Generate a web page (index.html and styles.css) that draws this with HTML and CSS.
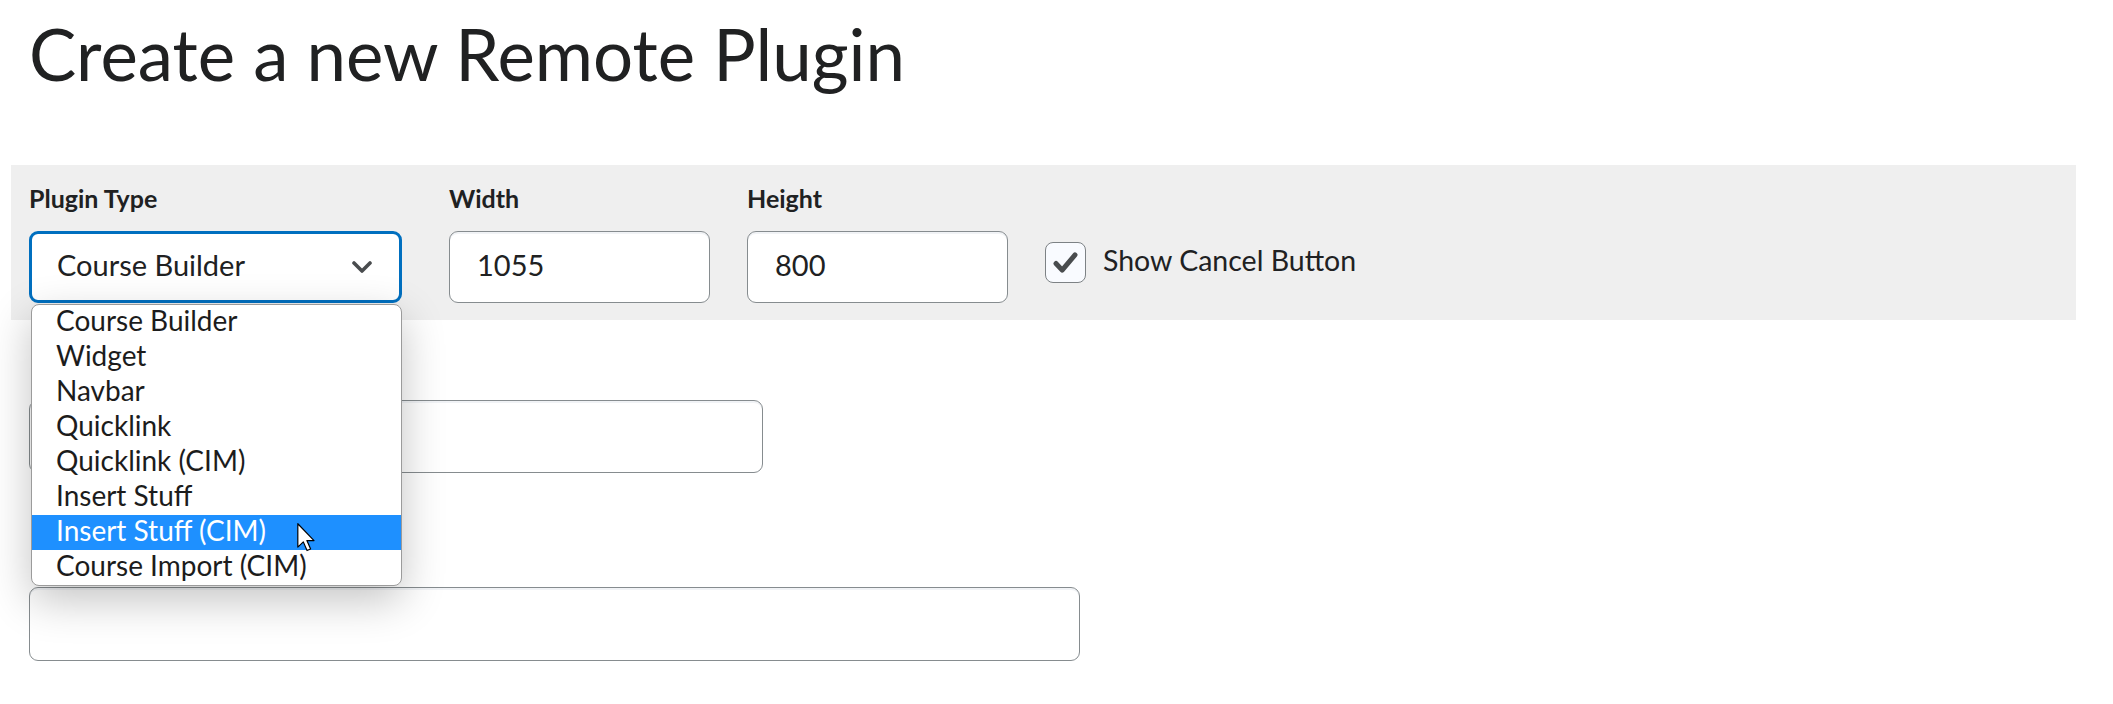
FILE: index.html
```html
<!DOCTYPE html>
<html lang="en">
<head>
<meta charset="utf-8">
<title>Create a new Remote Plugin</title>
<link rel="stylesheet" href="styles.css">
</head>
<body>
<div class="page">
  <h1 class="title">Create a new Remote Plugin</h1>

  <div class="settings">
    <div class="field field-type">
      <label class="label">Plugin Type</label>
      <div class="select">
        <span class="select-value">Course Builder</span>
        <svg class="chevron" width="20" height="12" viewBox="0 0 20 12"><polyline points="2,2 10,10 18,2" fill="none" stroke="#494c4e" stroke-width="3.6" stroke-linecap="round" stroke-linejoin="round"/></svg>
      </div>
    </div>
    <div class="field field-width">
      <label class="label">Width</label>
      <div class="input"><span class="input-text">1055</span></div>
    </div>
    <div class="field field-height">
      <label class="label">Height</label>
      <div class="input"><span class="input-text">800</span></div>
    </div>
    <div class="check-group">
      <span class="checkbox">
        <svg width="41" height="41" viewBox="0 0 41 41"><polyline points="10.5,21.5 17,28.5 30.5,12.5" fill="none" stroke="#494c4e" stroke-width="5.2" stroke-linecap="round" stroke-linejoin="round"/></svg>
      </span>
      <span class="check-label">Show Cancel Button</span>
    </div>
  </div>

  <div class="fields">
    <div class="field field-name">
      <div class="input input-name" aria-label="Name"></div>
    </div>
    <div class="field field-url">
      <div class="input input-url" aria-label="Launch Point URL"></div>
    </div>
  </div>

  <ul class="dropdown">
    <li class="option">Course Builder</li>
    <li class="option">Widget</li>
    <li class="option">Navbar</li>
    <li class="option">Quicklink</li>
    <li class="option">Quicklink (CIM)</li>
    <li class="option">Insert Stuff</li>
    <li class="option option-active">Insert Stuff (CIM)</li>
    <li class="option">Course Import (CIM)</li>
  </ul>

  <svg class="cursor" width="18" height="29" viewBox="0 0 12 19.5"><path d="M0.5,0.5 L0.5,16.2 L4.2,12.7 L6.7,18.5 L9.1,17.5 L6.6,11.8 L11.4,11.8 Z" fill="#ffffff" stroke="#000000" stroke-width="0.8" stroke-linejoin="round"/></svg>
</div>
</body>
</html>
```

FILE: styles.css
```css
html, body {
  margin: 0;
  padding: 0;
  background: #ffffff;
}

body {
  font-family: Lato, "Open Sans", "Liberation Sans", sans-serif;
  color: #202122;
}

.page {
  position: relative;
  width: 2065px;
  padding: 11px 0 0 11px;
}

.title {
  margin: 0 0 69px 18px;
  font-size: 70.8px;
  font-weight: 400;
  line-height: 85px;
  color: #202122;
}

.settings {
  display: flex;
  align-items: flex-end;
  background: #efefef;
  padding: 18px 18px 17px;
}

.field {
  display: flex;
  flex-direction: column;
}

.label {
  font-size: 25px;
  font-weight: 700;
  line-height: 30px;
  margin-bottom: 18px;
  color: #202122;
}

.field-type { width: 373px; }
.field-width { width: 261px; margin-left: 47px; }
.field-height { width: 261px; margin-left: 37px; }

.select {
  box-sizing: border-box;
  height: 72px;
  display: flex;
  align-items: center;
  border: 3px solid #006fbf;
  border-radius: 9px;
  background: #ffffff;
  padding: 0 27px 0 25px;
  font-size: 29px;
}

.select-value {
  flex: 1;
  padding-bottom: 5px;
}

.chevron { display: block; }

.input {
  box-sizing: border-box;
  height: 72px;
  display: flex;
  align-items: center;
  border: 1px solid #868c8f;
  border-radius: 9px;
  background: #ffffff;
  box-shadow: inset 0 2px 0 0 rgba(185, 194, 208, 0.2);
  padding: 0 26px 0 27px;
  font-size: 29px;
  color: #202122;
}

.input-text { padding-bottom: 5px; }

.check-group {
  display: flex;
  align-items: center;
  margin-left: 37px;
  margin-bottom: 20px;
}

.checkbox {
  box-sizing: border-box;
  width: 41px;
  height: 41px;
  border: 1px solid #7d8285;
  border-radius: 8px;
  background: #f9fbff;
  display: flex;
  align-items: center;
  justify-content: center;
}

.checkbox svg { display: block; }

.check-label {
  margin-left: 17px;
  padding-bottom: 6px;
  font-size: 28.5px;
  color: #202122;
}

.fields {
  padding-left: 18px;
}

.field-name { margin-top: 80px; }
.input-name { width: 734px; height: 73px; }

.field-url { margin-top: 114px; }
.input-url { width: 1051px; height: 74px; }

.dropdown {
  position: absolute;
  left: 31px;
  top: 304px;
  width: 371px;
  box-sizing: border-box;
  margin: 0;
  padding: 0;
  list-style: none;
  background: #ffffff;
  border: 1px solid #9b9b9b;
  border-radius: 8px;
  overflow: hidden;
  box-shadow: 0 14px 44px rgba(0, 0, 0, 0.24);
}

.option {
  height: 35px;
  box-sizing: border-box;
  padding: 0 10px 4px 24px;
  font-size: 28px;
  line-height: 31px;
  color: #1c1c1c;
  white-space: nowrap;
}

.option-active {
  background: #1e90ff;
  color: #ffffff;
}

.cursor {
  position: absolute;
  left: 297px;
  top: 523px;
  display: block;
}
```
